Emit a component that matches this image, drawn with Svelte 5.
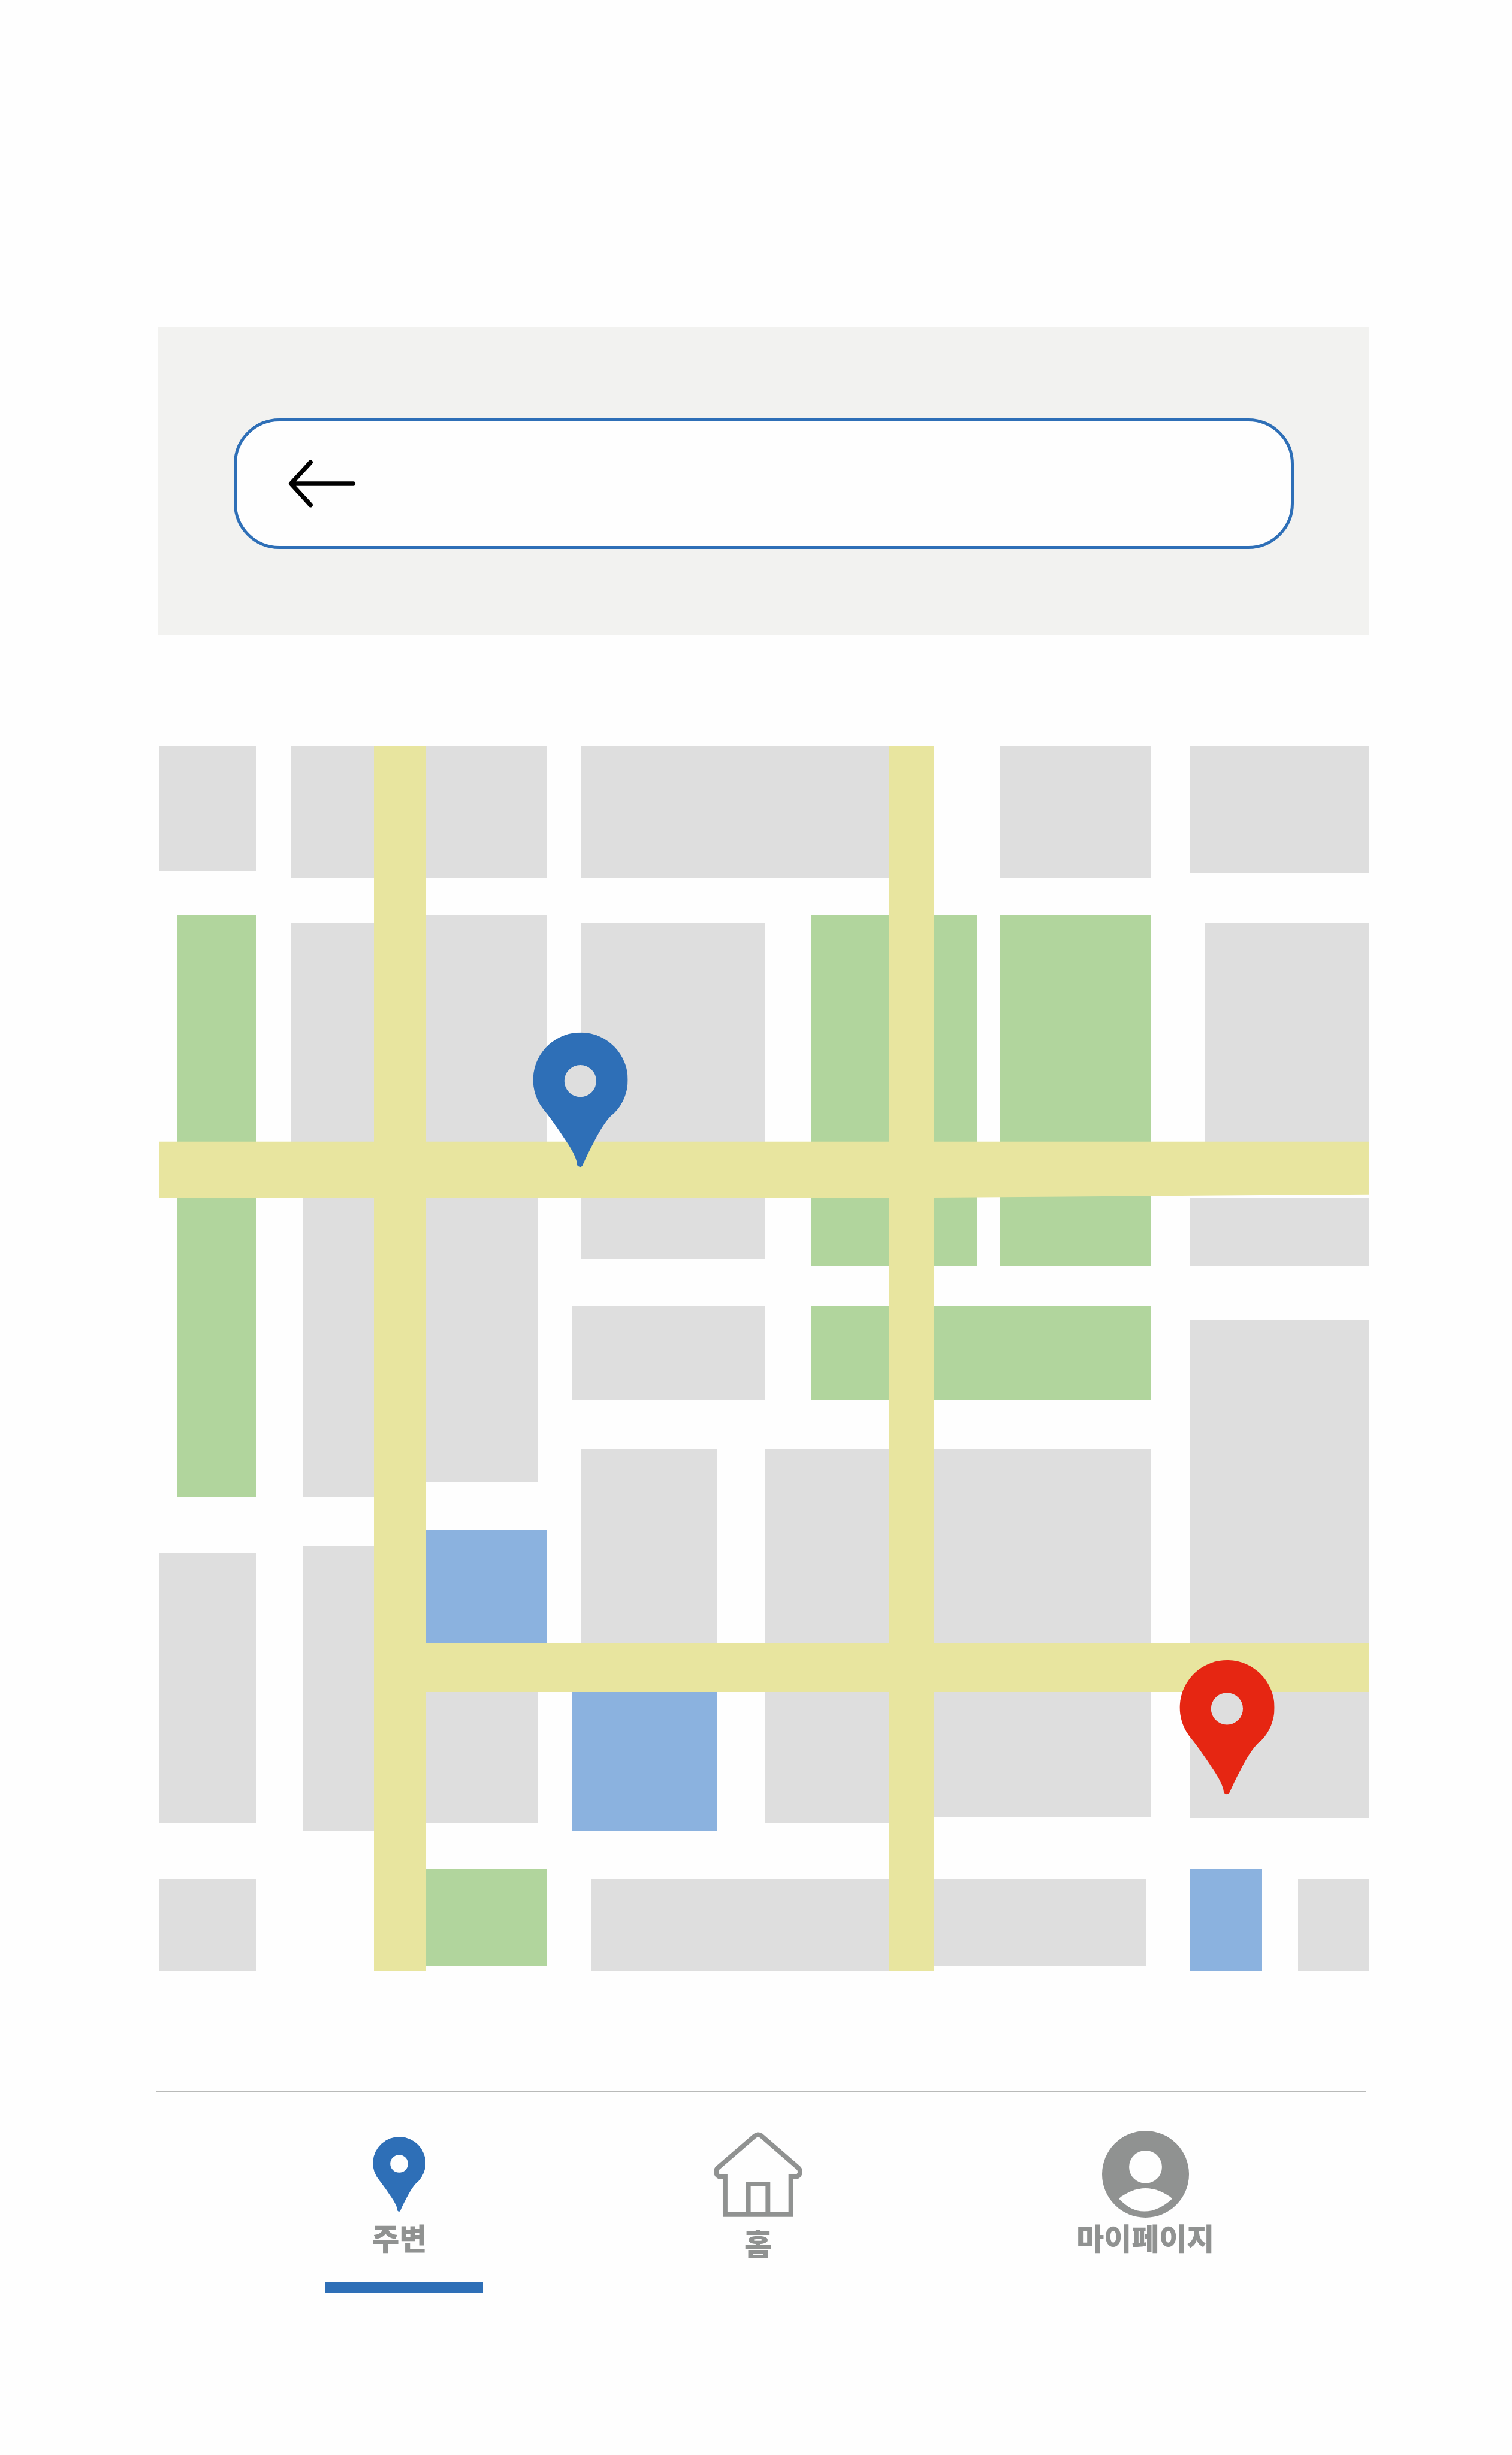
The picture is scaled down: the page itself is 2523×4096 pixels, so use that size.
<script>
  // City blocks on the map grid: [left, top, right, bottom]
  const buildings = [
    [0, 0, 239, 309],
    [327, 0, 956, 326],
    [1042, 0, 1802, 326],
    [2074, 0, 2447, 326],
    [2543, 0, 2984, 313],
    [327, 438, 531, 976],
    [658, 417, 956, 976],
    [1042, 438, 1493, 1266],
    [2578, 438, 2984, 976],
    [355, 1112, 531, 1853],
    [658, 1112, 933, 1815],
    [2543, 1114, 2984, 1284],
    [1019, 1381, 1493, 1613],
    [2543, 1417, 2984, 2644],
    [0, 1990, 239, 2656],
    [355, 1974, 531, 2676],
    [1042, 1733, 1375, 2214],
    [658, 2331, 933, 2656],
    [1493, 1733, 1802, 2656],
    [1910, 1733, 2447, 2640],
    [0, 2793, 239, 3020],
    [1066, 2793, 1802, 3020],
    [1910, 2793, 2433, 3008],
    [2808, 2793, 2984, 3020]
  ];
  const parks = [
    [46, 417, 239, 1853],
    [1608, 417, 2016, 1284],
    [2074, 417, 2447, 1284],
    [1608, 1381, 2447, 1613],
    [658, 2768, 956, 3008]
  ];
  const waters = [
    [658, 1932, 956, 2214],
    [1019, 2331, 1375, 2676],
    [2543, 2768, 2720, 3020]
  ];
  const layers = [
    { kind: 'building', blocks: buildings },
    { kind: 'park', blocks: parks },
    { kind: 'water', blocks: waters }
  ];

  const pins = [
    { kind: 'here', x: 922, y: 707 },
    { kind: 'place', x: 2516, y: 2254 }
  ];

  let query = $state('');
</script>

{#snippet pinShape()}
  <path
    d="M95 630A380 380 0 1 1 654 645C642 656 634 661 620 675C570 728 522 816 491 875C455 942 425 1005 397 1067Q390 1079 379 1079Q367 1079 355 1065C355 1015 310 935 269 875C215 793 150 698 95 630Z"
  />
  <circle class="hole" cx="380" cy="389" r="128" />
{/snippet}

<div class="page">
  <header class="search-panel">
    <form class="search" role="search" onsubmit={(e) => e.preventDefault()}>
      <button class="back" type="button" aria-label="뒤로">
        <svg viewBox="0 0 180 128" aria-hidden="true">
          <path d="M59 7L7 64L59 121M7 64H173" />
        </svg>
      </button>
      <input type="search" aria-label="검색" bind:value={query} />
    </form>
  </header>

  <main>
    <svg class="map" viewBox="0 0 2984 3020" role="img" aria-label="주변 지도">
      {#each layers as layer}
        <g class={layer.kind}>
          {#each layer.blocks as [x1, y1, x2, y2]}
            <rect x={x1} y={y1} width={x2 - x1} height={y2 - y1} />
          {/each}
        </g>
      {/each}
      <g class="road">
        <rect x="530" y="0" width="129" height="3020" />
        <rect x="1801" y="0" width="110" height="3020" />
        <path d="M0 976H2984V1106L1911 1114H0Z" />
        <rect x="659" y="2213" width="2325" height="119" />
      </g>
      {#each pins as pin}
        <svg
          class="pin {pin.kind}"
          x={pin.x}
          y={pin.y}
          width="234"
          height="332"
          viewBox="0 0 760 1080"
        >
          {@render pinShape()}
        </svg>
      {/each}
    </svg>
  </main>

  <nav class="tabs">
    <a class="tab active" href="#nearby" aria-current="page">
      <span class="icon">
        <svg class="pin here small" viewBox="0 0 760 1080" aria-hidden="true">
          {@render pinShape()}
        </svg>
      </span>
      <span class="label">주변</span>
    </a>
    <a class="tab home" href="#home">
      <span class="icon">
        <svg class="house" viewBox="0 0 711 681" aria-hidden="true">
          <path
            d="M383 31Q355 11 329 31L33 287C21 297 19 308 19 320C19 342 37 360 59 360H91V661H618V360H653C674 360 692 342 692 320C692 308 690 297 678 287Z"
          />
          <path d="M277 661V418H434V661" />
        </svg>
      </span>
      <span class="label">홈</span>
    </a>
    <a class="tab" href="#mypage">
      <span class="icon">
        <svg class="user" viewBox="0 0 698 698" aria-hidden="true">
          <circle cx="349" cy="349" r="349" />
          <circle class="hole" cx="349" cy="291" r="132" />
          <path
            class="hole"
            d="M134 545C200 492 275 462 349 462S500 492 564 545C500 608 420 648 340 648S200 612 134 545Z"
          />
        </svg>
      </span>
      <span class="label">마이페이지</span>
    </a>
  </nav>
</div>

<style>
  :global(body) {
    background: #fefefe;
  }

  .page {
    --blue: #2e6fb7;
    --grey: #909291;
    box-sizing: border-box;
    min-height: 100vh;
    padding: 546px 238px 0 264px;
    font-family: 'Noto Sans CJK KR', 'Noto Sans', sans-serif;
  }

  .search-panel {
    padding: 152px 126px 144px;
    background: #f2f2f0;
  }

  .search {
    display: flex;
    align-items: center;
    box-sizing: border-box;
    height: 218px;
    padding: 0 86px;
    gap: 40px;
    border: 5px solid var(--blue);
    border-radius: 76px;
    background: #fefefe;
  }

  .back {
    display: flex;
    padding: 0;
    border: 0;
    background: none;
    cursor: pointer;
  }

  .back svg {
    width: 113px;
    height: 80px;
    fill: none;
    stroke: #000;
    stroke-width: 12;
    stroke-linecap: round;
    stroke-linejoin: round;
  }

  input {
    flex: 1;
    min-width: 0;
    padding: 0;
    border: 0;
    outline: 0;
    background: none;
    font: inherit;
    font-size: 64px;
  }

  main {
    margin: 184px 0 0 1px;
  }

  .map {
    display: block;
    width: 100%;
    height: auto;
  }

  .building {
    fill: #dedede;
  }

  .park {
    fill: #b1d59d;
  }

  .water {
    fill: #8bb2df;
  }

  .road {
    fill: #e8e59f;
  }

  .map rect {
    shape-rendering: crispEdges;
  }

  .here {
    fill: var(--blue);
  }

  .place {
    fill: #e62612;
  }

  .hole {
    fill: #fefefe;
  }

  .map .hole {
    fill: #dedede;
  }

  .tabs {
    display: grid;
    grid-template-columns: 487fr 695fr 598fr;
    margin: 200px 5px 0 -4px;
    padding: 64px 70px 0 171px;
    border-top: 3px solid #b9bab9;
  }

  .tab {
    display: flex;
    flex-direction: column;
    align-items: center;
    justify-self: center;
    gap: 2px;
    color: var(--grey);
    text-decoration: none;
  }

  .home {
    gap: 11px;
  }

  .active {
    box-sizing: border-box;
    width: 264px;
    padding: 0 16px 64px 0;
    background: linear-gradient(var(--blue), var(--blue)) bottom / 100% 19px no-repeat;
  }

  .icon {
    display: flex;
    align-items: center;
    height: 145px;
  }

  .small {
    width: 88px;
    height: 125px;
  }

  .house {
    width: 148px;
    height: 142px;
    fill: none;
    stroke: var(--grey);
    stroke-width: 38;
  }

  .user {
    width: 145px;
    height: 145px;
    fill: var(--grey);
  }

  .label {
    font-size: 50px;
    font-weight: 900;
    line-height: 60px;
  }
</style>
